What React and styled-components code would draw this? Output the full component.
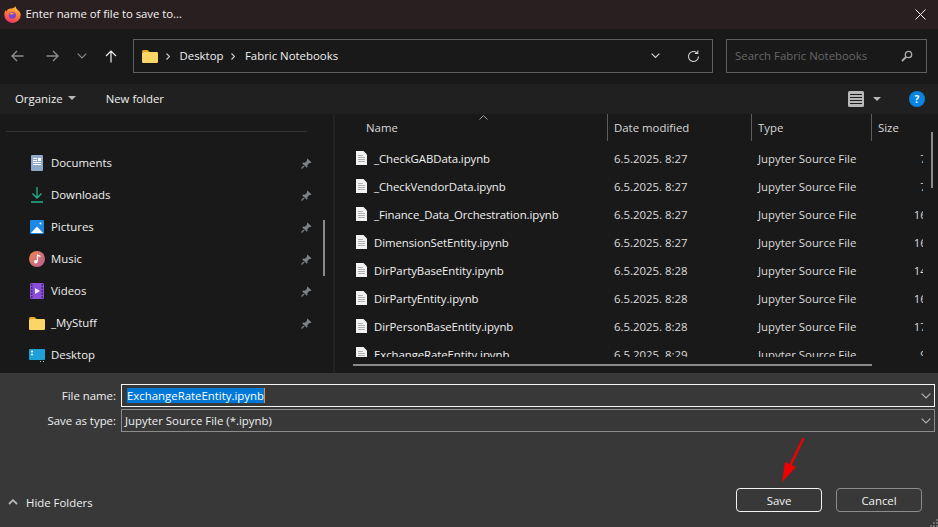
import styled, { createGlobalStyle } from "styled-components";

const GlobalStyle = createGlobalStyle`
  html, body {
    margin: 0;
    padding: 0;
    background: #191919;
  }
  body {
    font-family: "Open Sans", "Noto Sans", sans-serif;
    font-size: 11.4px;
    color: #f0f0f0;
    overflow: hidden;
  }
`;

const pinned = [
  { name: "Documents", icon: <DocumentsIcon />, pin: true },
  { name: "Downloads", icon: <DownloadsIcon />, pin: true },
  { name: "Pictures", icon: <PicturesIcon />, pin: true },
  { name: "Music", icon: <MusicIcon />, pin: true },
  { name: "Videos", icon: <VideosIcon />, pin: true },
  { name: "_MyStuff", icon: <FolderIcon />, pin: true },
  { name: "Desktop", icon: <DesktopIcon />, pin: false },
];

const files = [
  { name: "_CheckGABData.ipynb", date: "6.5.2025. 8:27", size: "7 KB" },
  { name: "_CheckVendorData.ipynb", date: "6.5.2025. 8:27", size: "7 KB" },
  { name: "_Finance_Data_Orchestration.ipynb", date: "6.5.2025. 8:27", size: "16 KB" },
  { name: "DimensionSetEntity.ipynb", date: "6.5.2025. 8:27", size: "16 KB" },
  { name: "DirPartyBaseEntity.ipynb", date: "6.5.2025. 8:28", size: "14 KB" },
  { name: "DirPartyEntity.ipynb", date: "6.5.2025. 8:28", size: "16 KB" },
  { name: "DirPersonBaseEntity.ipynb", date: "6.5.2025. 8:28", size: "17 KB" },
  { name: "ExchangeRateEntity.ipynb", date: "6.5.2025. 8:29", size: "9 KB" },
];

export default function App() {
  return (
    <Dialog>
      <GlobalStyle />
      <TitleBar>
        <FirefoxIcon />
        <TitleText>Enter name of file to save to...</TitleText>
        <CloseIcon />
      </TitleBar>

      <NavBar>
        <NavButton $w={34}>
          <ArrowLeft />
        </NavButton>
        <NavButton $w={36}>
          <ArrowRight />
        </NavButton>
        <NavButton $w={24}>
          <Chevron color="#8a8a8a" size={10} />
        </NavButton>
        <NavButton $w={34}>
          <ArrowUp />
        </NavButton>
        <AddressBox>
          <FolderIcon />
          <Crumb>
            <CrumbCaret />
            <CrumbText>Desktop</CrumbText>
          </Crumb>
          <Crumb>
            <CrumbCaret />
            <CrumbText>Fabric Notebooks</CrumbText>
          </Crumb>
          <AddressTools>
            <Chevron color="#d8d8d8" size={9} />
            <RefreshIcon />
          </AddressTools>
        </AddressBox>
        <SearchBox>
          <CrumbText>Search Fabric Notebooks</CrumbText>
          <SearchIcon />
        </SearchBox>
      </NavBar>

      <Toolbar>
        <ToolGroup>
          <ToolLabel>
            Organize
            <Caret />
          </ToolLabel>
          <ToolLabel>New folder</ToolLabel>
        </ToolGroup>
        <ToolGroup>
          <ViewIcon />
          <Caret />
          <HelpBadge>?</HelpBadge>
        </ToolGroup>
      </Toolbar>

      <Content>
        <Sidebar>
          <SidebarRule />
          {pinned.map((item) => (
            <SideRow key={item.name}>
              <SideIcon>{item.icon}</SideIcon>
              <SideName>{item.name}</SideName>
              {item.pin && <PinIcon />}
            </SideRow>
          ))}
          <SideScroll />
        </Sidebar>
        <Divider />
        <FilePane>
          <HeaderRow>
            <HeaderCell>
              <NameHeading>Name</NameHeading>
              <SortCaret />
            </HeaderCell>
            <HeaderCell $line>Date modified</HeaderCell>
            <HeaderCell $line>Type</HeaderCell>
            <HeaderCell $line>Size</HeaderCell>
          </HeaderRow>
          <FileRows>
            {files.map((file) => (
              <FileRow key={file.name}>
                <NameCell>
                  <PageIcon />
                  <span>{file.name}</span>
                </NameCell>
                <Cell>{file.date}</Cell>
                <Cell>Jupyter Source File</Cell>
                <SizeCell>
                  <SizeText>{file.size}</SizeText>
                </SizeCell>
              </FileRow>
            ))}
          </FileRows>
          <VerticalScroll />
          <HorizontalScroll />
        </FilePane>
      </Content>

      <Footer>
        <FieldRow>
          <FieldLabel>File name:</FieldLabel>
          <FieldBox $active>
            <Selected>ExchangeRateEntity.ipynb</Selected>
            <Chevron color="#b0b0b0" size={10} />
          </FieldBox>
        </FieldRow>
        <FieldRow>
          <FieldLabel>Save as type:</FieldLabel>
          <FieldBox>
            <span>Jupyter Source File (*.ipynb)</span>
            <Chevron color="#b0b0b0" size={10} />
          </FieldBox>
        </FieldRow>
        <ActionRow>
          <HideFolders>
            <HideCaret />
            Hide Folders
          </HideFolders>
          <Buttons>
            <DialogButton $primary>Save</DialogButton>
            <DialogButton>Cancel</DialogButton>
          </Buttons>
        </ActionRow>
        <Grip />
      </Footer>

      <RedArrow />
    </Dialog>
  );
}

function FirefoxIcon() {
  return (
    <svg width="17" height="17" viewBox="0 0 17 17">
      <defs>
        <linearGradient id="fx" x1="0.7" y1="0" x2="0.3" y2="1">
          <stop offset="0" stopColor="#ffc83a" />
          <stop offset="0.45" stopColor="#ff7a30" />
          <stop offset="1" stopColor="#f0306c" />
        </linearGradient>
      </defs>
      <path
        d="M11.500.3c.2 1.700 1.200 2.700 2.600 3.900 1.600 1.400 2.600 3 2.600 4.600a8.200 8.200 0 0 1-16.400 0c0-1.800.5-3.500 1.400-4.800l.5 1.500C3.200 3.600 4.800 2.600 6.500 2.600c2 0 4-.5 5-2.300z"
        fill="url(#fx)"
      />
      <circle cx="8.400" cy="9.300" r="3.500" fill="#7a45d0" />
      <path d="M5.400 7.700c1.300-1.300 3.800-1.700 5.600-.5-1.300 0-2 .4-2.600 1.300-1 .4-2.100 0-3-.8z" fill="#ff9a3a" />
    </svg>
  );
}

function CloseIcon() {
  return (
    <CloseSvg width="11" height="11" viewBox="0 0 11 11">
      <path d="M.5.500l10 10M10.500.500l-10 10" stroke="#f2f2f2" strokeWidth="1" fill="none" />
    </CloseSvg>
  );
}

function ArrowLeft() {
  return (
    <svg width="13" height="12" viewBox="0 0 13 12">
      <path d="M12.500 6H1M6 1L1 6l5 5" stroke="#8c8c8c" strokeWidth="1.400" fill="none" />
    </svg>
  );
}

function ArrowRight() {
  return (
    <svg width="13" height="12" viewBox="0 0 13 12">
      <path d="M.5 6H12M7 1l5 5-5 5" stroke="#8c8c8c" strokeWidth="1.400" fill="none" />
    </svg>
  );
}

function ArrowUp() {
  return (
    <svg width="12" height="13" viewBox="0 0 12 13">
      <path d="M6 12.500V1M1 6l5-5 5 5" stroke="#f0f0f0" strokeWidth="1.200" fill="none" />
    </svg>
  );
}

function Chevron({ color, size }) {
  return (
    <svg width={size} height={size * 0.6} viewBox="0 0 10 6">
      <path d="M.7.700L5 5l4.300-4.300" stroke={color} strokeWidth="1.200" fill="none" />
    </svg>
  );
}

function CrumbCaret() {
  return (
    <svg width="4" height="7" viewBox="0 0 4 7">
      <path d="M.5.500l3 3-3 3" stroke="#d0d0d0" strokeWidth="1.100" fill="none" />
    </svg>
  );
}

function RefreshIcon() {
  return (
    <svg width="13" height="13" viewBox="0 0 13 13">
      <path d="M11.500 6.500a5 5 0 1 1-1.600-3.700" stroke="#d0d0d0" strokeWidth="1.100" fill="none" />
      <path d="M10.800.5v3H7.800" stroke="#d0d0d0" strokeWidth="1.100" fill="none" />
    </svg>
  );
}

function SearchIcon() {
  return (
    <svg width="12" height="12" viewBox="0 0 12 12">
      <circle cx="7.500" cy="4.500" r="3.200" stroke="#b0b0b0" strokeWidth="1.300" fill="none" />
      <path d="M5 7L1 11" stroke="#b0b0b0" strokeWidth="1.800" fill="none" />
    </svg>
  );
}

function ViewIcon() {
  return (
    <svg width="16" height="16" viewBox="0 0 16 16">
      <rect width="16" height="16" rx="1.500" fill="#b8b8b8" />
      <path d="M2 3.500h12M2 6.500h12M2 9.500h12M2 12.500h12" stroke="#1c1c1c" strokeWidth="1" />
    </svg>
  );
}

function DocumentsIcon() {
  return (
    <svg width="12" height="16" viewBox="0 0 12 16">
      <rect width="12" height="16" rx="1" fill="#8fa9c9" />
      <path d="M2 3.500h4M2 5.500h4M2 7.500h8M2 9.500h8" stroke="#fff" strokeWidth="1" />
      <rect x="7" y="3" width="3" height="3" fill="#fff" />
    </svg>
  );
}

function DownloadsIcon() {
  return (
    <svg width="12" height="16" viewBox="0 0 12 16">
      <path d="M6 0v11M1.500 6.500L6 11l4.500-4.500" stroke="#1fb58f" strokeWidth="1.300" fill="none" />
      <path d="M0 15h12" stroke="#1fb58f" strokeWidth="1.500" />
    </svg>
  );
}

function PicturesIcon() {
  return (
    <svg width="14" height="14" viewBox="0 0 14 14">
      <rect width="14" height="14" rx="1" fill="#1e88e5" />
      <path d="M1 13L7 6.500 13 13z" fill="#fff" />
      <circle cx="10.500" cy="3.500" r="1" fill="#fff" />
    </svg>
  );
}

function MusicIcon() {
  return (
    <svg width="16" height="16" viewBox="0 0 16 16">
      <defs>
        <linearGradient id="mus" x1="0" y1="0" x2="1" y2="1">
          <stop offset="0" stopColor="#f08a4b" />
          <stop offset="1" stopColor="#b85a9a" />
        </linearGradient>
      </defs>
      <circle cx="8" cy="8" r="8" fill="url(#mus)" />
      <path d="M8.500 3.500v7" stroke="#fff" strokeWidth="1.200" />
      <path d="M8.500 3.500l3 1.200v1.300l-3-1z" fill="#fff" />
      <circle cx="6.800" cy="10.800" r="1.800" fill="#fff" />
    </svg>
  );
}

function VideosIcon() {
  return (
    <svg width="14" height="16" viewBox="0 0 14 16">
      <rect width="14" height="16" rx="1.500" fill="#8a4fd8" />
      <path d="M1 2h1.500M1 5h1.500M1 8h1.500M1 11h1.500M1 14h1.500M11.500 2H13M11.500 5H13M11.500 8H13M11.500 11H13M11.500 14H13" stroke="#35205c" strokeWidth="1.300" />
      <path d="M5 5l5 3-5 3z" fill="#f4efff" />
    </svg>
  );
}

function FolderIcon() {
  return (
    <svg width="16" height="13" viewBox="0 0 16 13">
      <path d="M0 1.500A1.500 1.500 0 0 1 1.500 0h4l2 2H0z" fill="#e8a91f" />
      <rect y="2" width="16" height="11" rx="1.200" fill="#fbd568" />
    </svg>
  );
}

function DesktopIcon() {
  return (
    <svg width="16" height="13" viewBox="0 0 16 13">
      <rect width="16" height="11" rx="1" fill="#1fa0d8" />
      <path d="M2 2.500h2M2 5.500h2" stroke="#fff" strokeWidth="1.400" />
      <path d="M11 12.500h1M14 12.500h1" stroke="#9ad8f2" strokeWidth="1" />
    </svg>
  );
}

function PinIcon() {
  return (
    <PinSvg width="11" height="11" viewBox="0 0 11 11">
      <path d="M6.500.5l4 4-1 .6-1-.2L6.300 7l.2 2L5.800 9.800 1.200 5.200 2 4.500l2 .2 2.100-2.200-.2-1z" fill="#7d8287" />
      <path d="M3 8L.5 10.500" stroke="#7d8287" strokeWidth="1.200" />
    </PinSvg>
  );
}

function PageIcon() {
  return (
    <PageSvg width="11" height="14" viewBox="0 0 11 14">
      <path d="M0 0h7.500L11 3.500V14H0z" fill="#f2f2f2" />
      <path d="M2 4.500h5M2 6.500h7M2 8.500h7M2 10.500h7" stroke="#a8a8a8" strokeWidth="0.900" />
    </PageSvg>
  );
}

function RedArrow() {
  return (
    <ArrowSvg width="26" height="46" viewBox="0 0 26 46">
      <path d="M23 1L10 28" stroke="#f00000" strokeWidth="2.400" strokeLinecap="round" fill="none" />
      <path d="M2 44l3-20 11 5z" fill="#f00000" />
    </ArrowSvg>
  );
}

function Grip() {
  return (
    <GripSvg width="8" height="8" viewBox="0 0 8 8">
      <path d="M6 0h2v2H6zM3 3h2v2H3zM6 3h2v2H6zM0 6h2v2H0zM3 6h2v2H3zM6 6h2v2H6z" fill="#6e6e6e" />
    </GripSvg>
  );
}

function Caret() {
  return <CaretShape />;
}

function HideCaret() {
  return (
    <svg width="10" height="6" viewBox="0 0 10 6">
      <path d="M1 5l4-3.800L9 5" stroke="#b8b8b8" strokeWidth="1.800" fill="none" />
    </svg>
  );
}

function SortCaret() {
  return (
    <SortSvg width="9" height="5" viewBox="0 0 9 5">
      <path d="M.5 4.500l4-4 4 4" stroke="#a0a0a0" strokeWidth="1" fill="none" />
    </SortSvg>
  );
}

const Dialog = styled.div`
  position: relative;
  display: flex;
  flex-direction: column;
  width: 938px;
  height: 527px;
  overflow: hidden;
`;

const TitleBar = styled.header`
  display: flex;
  align-items: center;
  gap: 4.500px;
  height: 29px;
  padding: 0 12px 0 4px;
  background: #2a1f20;
  flex-shrink: 0;
`;

const TitleText = styled.span`
  flex: 1;
  padding-bottom: 2px;
  color: #f2f2f2;
  letter-spacing: -0.04px;
`;

const CloseSvg = styled.svg`
  flex-shrink: 0;
`;

const NavBar = styled.nav`
  display: flex;
  align-items: center;
  height: 55px;
  padding-bottom: 1px;
  box-sizing: border-box;
  background: #191919;
  flex-shrink: 0;
`;

const NavButton = styled.div`
  display: flex;
  align-items: center;
  justify-content: center;
  width: ${(p) => p.$w}px;
`;

const AddressBox = styled.div`
  display: flex;
  align-items: center;
  box-sizing: border-box;
  width: 580px;
  height: 34px;
  margin: 0 13px 0 5px;
  padding: 0 12px 0 8px;
  border: 1px solid #5f5f5f;
`;

const Crumb = styled.span`
  display: flex;
  align-items: center;
  gap: 10px;
  margin-left: 7.500px;
`;

const CrumbText = styled.span`
  padding-bottom: 2px;
`;

const AddressTools = styled.div`
  display: flex;
  align-items: center;
  gap: 27px;
  margin-left: auto;
`;

const SearchBox = styled.div`
  display: flex;
  align-items: center;
  justify-content: space-between;
  box-sizing: border-box;
  width: 201px;
  height: 34px;
  padding: 0 13px 0 8px;
  border: 1px solid #5f5f5f;
  color: #676767;
`;

const Toolbar = styled.div`
  display: flex;
  align-items: center;
  justify-content: space-between;
  height: 30px;
  padding: 0 13px 0 15px;
  background: #202020;
  flex-shrink: 0;
`;

const ToolGroup = styled.div`
  display: flex;
  align-items: center;
  gap: 9px;
`;

const ToolLabel = styled.span`
  display: flex;
  align-items: center;
  gap: 5px;
  margin-right: 21px;
  padding-bottom: 2px;
  color: #efefef;
`;

const CaretShape = styled.span`
  width: 0;
  height: 0;
  border-left: 4px solid transparent;
  border-right: 4px solid transparent;
  border-top: 4px solid #b8b8b8;
`;

const HelpBadge = styled.span`
  display: flex;
  align-items: center;
  justify-content: center;
  width: 16px;
  height: 16px;
  margin-left: 19px;
  border-radius: 50%;
  background: #0a84e0;
  color: #fff;
  font-size: 10px;
  font-weight: 700;
`;

const Content = styled.main`
  display: flex;
  flex: 1;
  min-height: 0;
  background: #191919;
`;

const Sidebar = styled.aside`
  position: relative;
  width: 333px;
  flex-shrink: 0;
  box-sizing: border-box;
  padding-top: 17px;
`;

const SidebarRule = styled.div`
  height: 1px;
  margin: 0 26px 15px 6px;
  background: #343434;
`;

const SideRow = styled.div`
  display: flex;
  align-items: center;
  height: 32px;
  padding-right: 21px;
`;

const SideIcon = styled.span`
  display: flex;
  align-items: center;
  justify-content: center;
  width: 16px;
  margin: 0 6px 0 29px;
`;

const SideName = styled.span`
  flex: 1;
  padding-bottom: 2px;
  color: #efefef;
`;

const PinSvg = styled.svg`
  flex-shrink: 0;
`;

const SideScroll = styled.div`
  position: absolute;
  left: 323px;
  top: 106px;
  width: 2px;
  height: 56px;
  background: #8a8a8a;
`;

const Divider = styled.div`
  width: 2px;
  background: #222;
  flex-shrink: 0;
`;

const FilePane = styled.section`
  position: relative;
  flex: 1;
  min-width: 0;
`;

const columns = "272px 144px 120px 52px";

const HeaderRow = styled.div`
  display: grid;
  grid-template-columns: ${columns};
  height: 27px;
  margin-bottom: 3px;
`;

const HeaderCell = styled.div`
  position: relative;
  display: flex;
  align-items: center;
  padding-left: 6px;
  color: #d8d8d8;
  border-left: ${(p) => (p.$line ? "1px solid #5c5c5c" : "none")};
  white-space: nowrap;
`;

const NameHeading = styled.span`
  margin-left: 25px;
`;

const SortSvg = styled.svg`
  position: absolute;
  left: 144px;
  top: 1px;
`;

const FileRows = styled.div`
  height: 213px;
  overflow: hidden;
`;

const FileRow = styled.div`
  display: grid;
  grid-template-columns: ${columns};
  align-items: center;
  height: 28px;
`;

const NameCell = styled.div`
  display: flex;
  align-items: center;
  gap: 7px;
  padding-left: 21px;
  color: #f0f0f0;
  letter-spacing: -0.07px;
`;

const PageSvg = styled.svg`
  flex-shrink: 0;
`;

const Cell = styled.div`
  padding-left: 7px;
  color: #dcdcdc;
  white-space: nowrap;
`;

const SizeCell = styled.div`
  overflow: hidden;
`;

const SizeText = styled.div`
  width: 73px;
  text-align: right;
  color: #dcdcdc;
`;

const VerticalScroll = styled.div`
  position: absolute;
  left: 596px;
  top: 18px;
  width: 2px;
  height: 56px;
  background: #8a8a8a;
`;

const HorizontalScroll = styled.div`
  position: absolute;
  left: 18px;
  top: 250px;
  width: 519px;
  height: 2px;
  background: #8a8a8a;
`;

const Footer = styled.footer`
  position: relative;
  display: flex;
  flex-direction: column;
  gap: 2px;
  box-sizing: border-box;
  height: 154px;
  padding: 11px 3px 15px 0;
  background: #383838;
  flex-shrink: 0;
`;

const FieldRow = styled.div`
  display: grid;
  grid-template-columns: 116px 1fr;
  column-gap: 5px;
  align-items: center;
  height: 23px;
`;

const FieldLabel = styled.label`
  text-align: right;
  color: #efefef;
`;

const FieldBox = styled.div`
  display: flex;
  align-items: center;
  justify-content: space-between;
  box-sizing: border-box;
  height: 23px;
  padding: 0 3px 0 ${(p) => (p.$active ? 5 : 3)}px;
  border: 1px solid ${(p) => (p.$active ? "#f4f4f4" : "#8c8c8c")};
  color: #efefef;
`;

const Selected = styled.span`
  padding: 0;
  background: #0078d7;
  color: #fff;
  border-right: 1px solid #f08a3c;
`;

const ActionRow = styled.div`
  display: flex;
  align-items: flex-end;
  justify-content: space-between;
  margin-top: auto;
  padding-right: 13px;
`;

const HideFolders = styled.div`
  display: flex;
  align-items: center;
  gap: 8px;
  height: 24px;
  padding: 4px 0 0 8px;
  box-sizing: border-box;
  color: #efefef;
`;

const Buttons = styled.div`
  display: flex;
  gap: 14px;
`;

const DialogButton = styled.button`
  box-sizing: border-box;
  width: 86px;
  height: 24px;
  padding: 0;
  border: 1px solid ${(p) => (p.$primary ? "#f2f2f2" : "#8c8c8c")};
  border-radius: 4px;
  background: transparent;
  color: #f2f2f2;
  font: inherit;
`;

const GripSvg = styled.svg`
  position: absolute;
  right: 0;
  bottom: 0;
`;

const ArrowSvg = styled.svg`
  position: absolute;
  left: 780px;
  top: 438px;
`;
